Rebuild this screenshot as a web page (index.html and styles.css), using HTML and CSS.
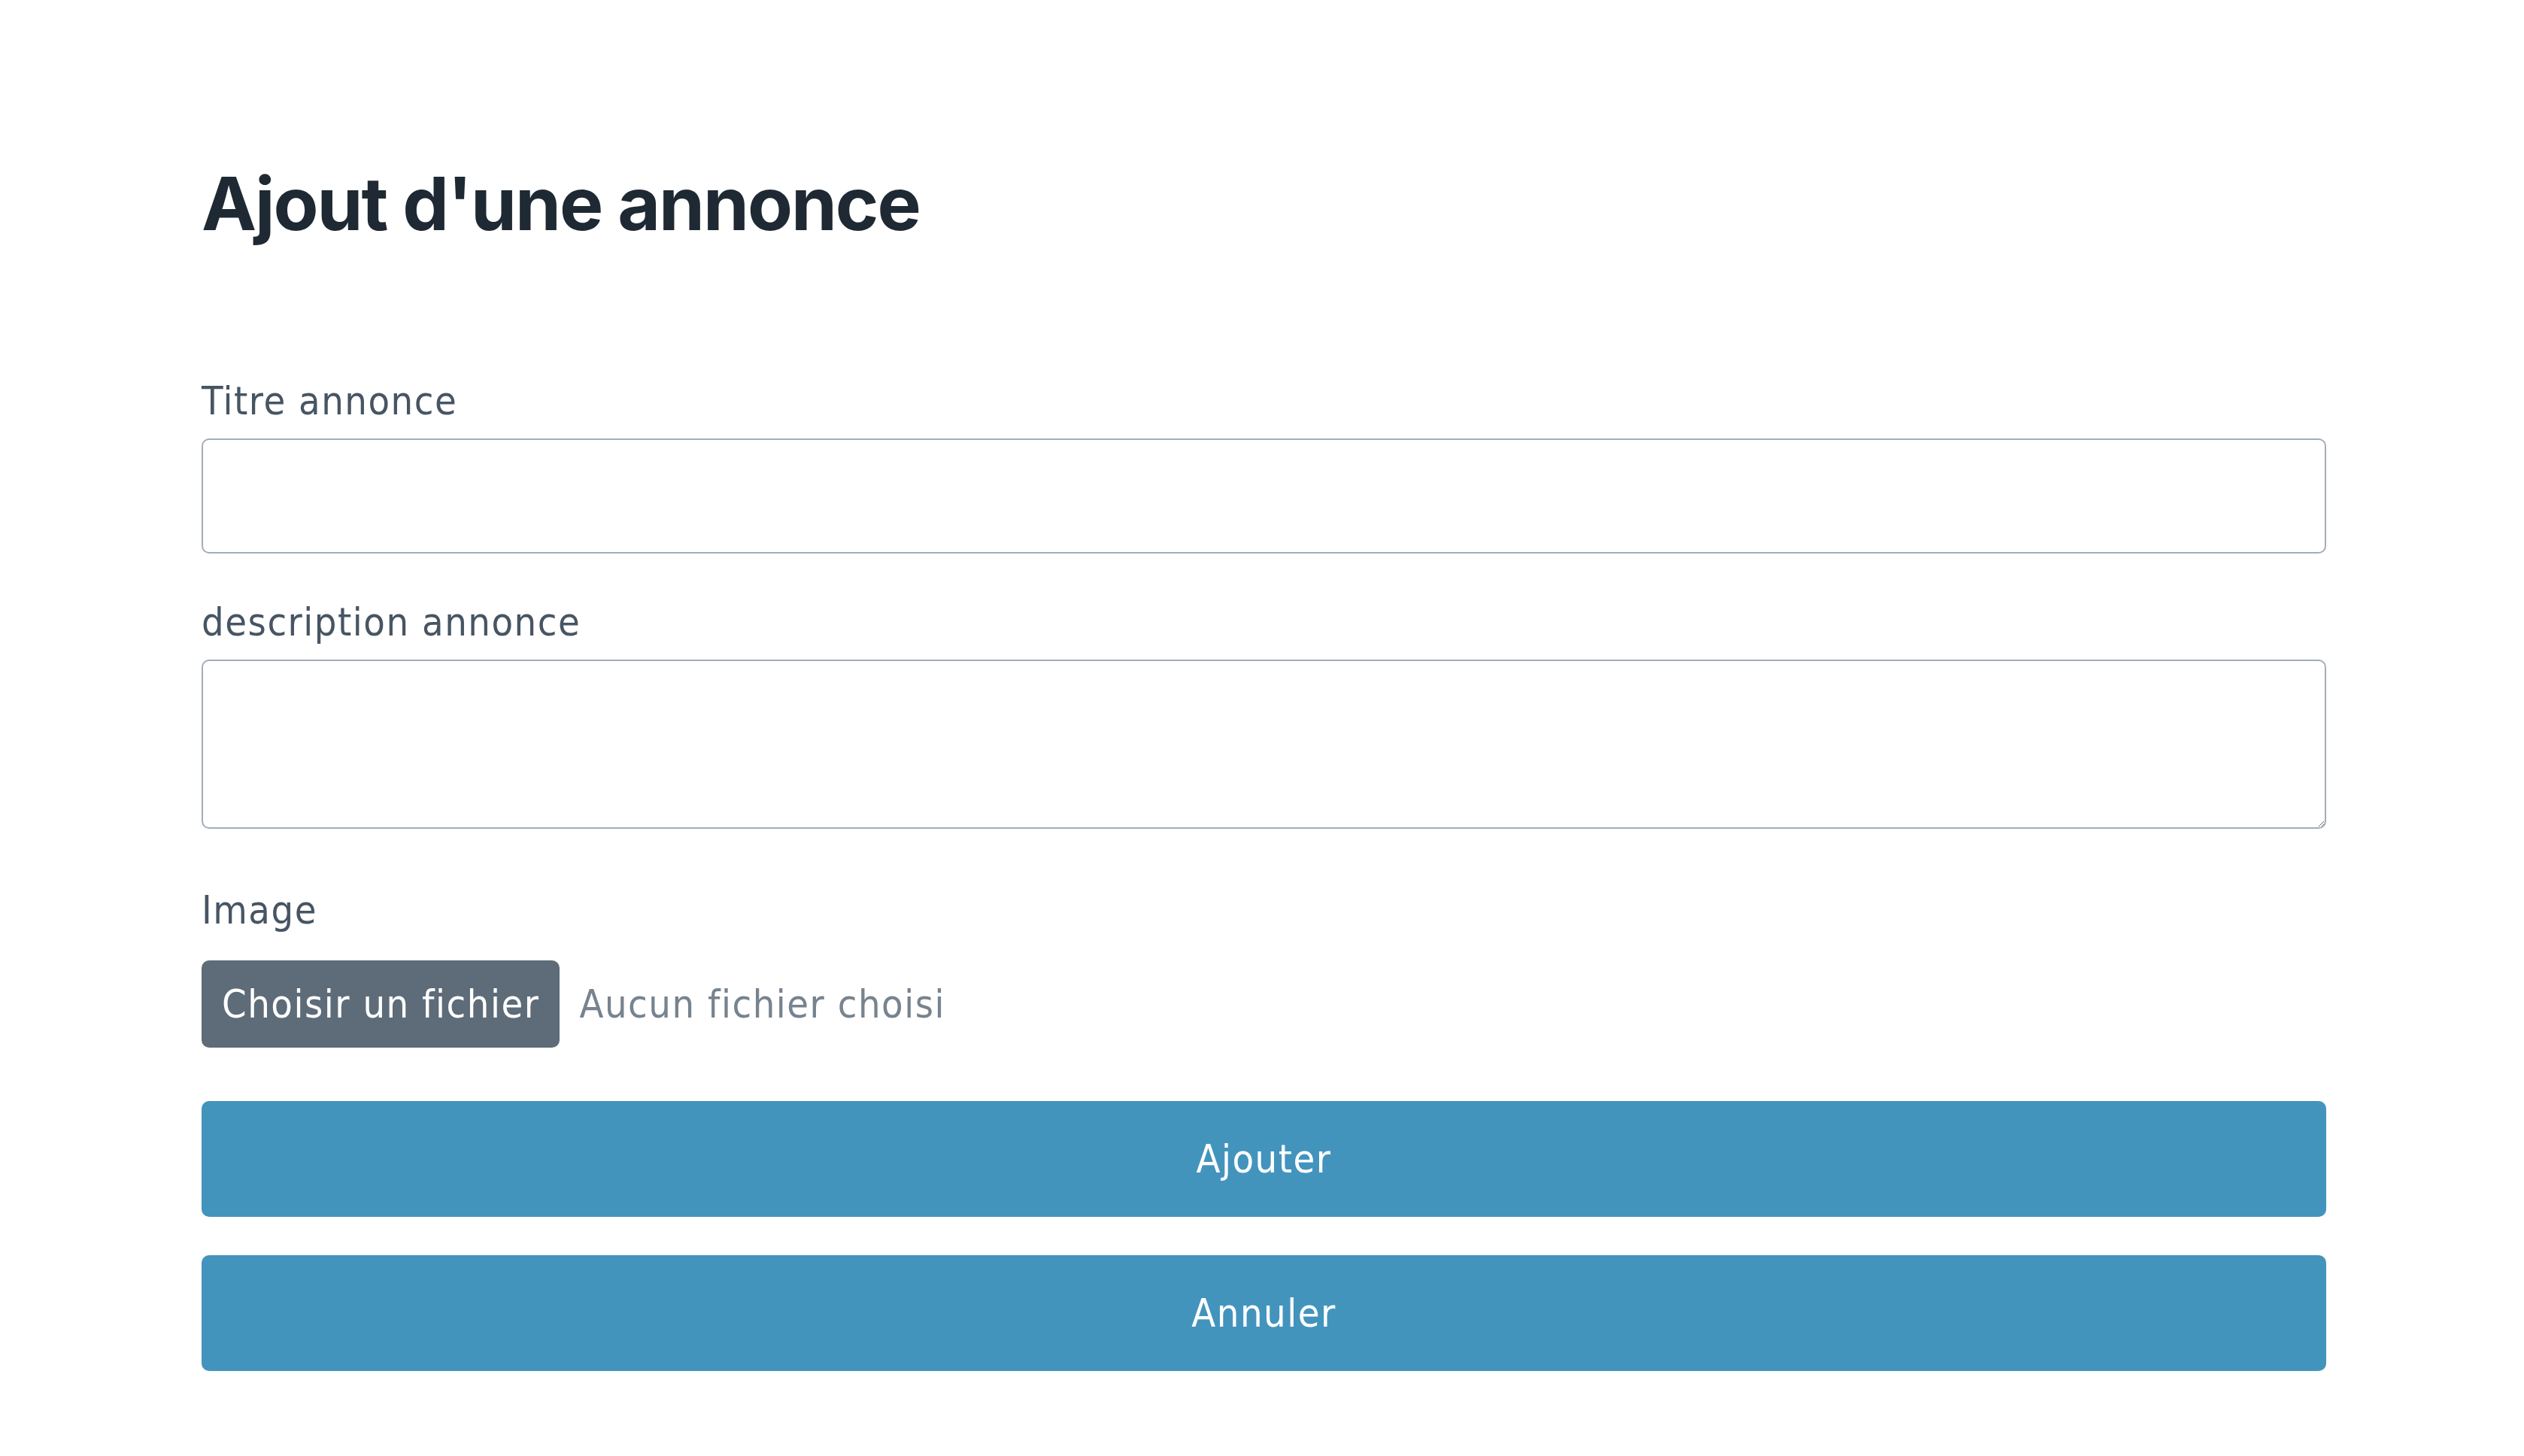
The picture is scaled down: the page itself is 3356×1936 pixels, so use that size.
FILE: index.html
```html
<!DOCTYPE html>
<html lang="fr">
<head>
<meta charset="utf-8">
<title>Ajout d'une annonce</title>
<link rel="stylesheet" href="styles.css">
</head>
<body>
<main class="page">
  <h1 class="title">Ajout d'une annonce</h1>
  <form class="form">
    <div class="field">
      <label class="label" for="titre">Titre annonce</label>
      <input class="input" id="titre" type="text">
    </div>
    <div class="field field-area">
      <label class="label" for="desc">description annonce</label>
      <textarea class="textarea" id="desc"></textarea>
    </div>
    <div class="field field-file">
      <span class="label">Image</span>
      <div class="file-row">
        <label class="file-btn">Choisir un fichier<input class="file-input" type="file"></label>
        <span class="file-name">Aucun fichier choisi</span>
      </div>
    </div>
    <button class="btn btn-add" type="submit">Ajouter</button>
    <button class="btn" type="button">Annuler</button>
  </form>
</main>
</body>
</html>
```

FILE: styles.css
```css
html, body {
  margin: 0;
  padding: 0;
  background: #ffffff;
}

.page {
  width: 2825px;
  margin: 0 0 0 268px;
  padding-top: 212px;
  box-sizing: border-box;
}

.title {
  margin: 0;
  font-family: Inter, "Liberation Sans", sans-serif;
  font-weight: 700;
  font-size: 98px;
  line-height: 1.2;
  letter-spacing: -2.1px;
  color: #1f2933;
}

.form {
  display: flex;
  flex-direction: column;
  margin-top: 171px;
}

.field {
  display: flex;
  flex-direction: column;
  margin-bottom: 59px;
}

.field-area {
  margin-bottom: 76px;
}

.field-file {
  margin-bottom: 71px;
}

.label {
  display: block;
  font-family: "DejaVu Sans Condensed", "DejaVu Sans", sans-serif;
  font-stretch: condensed;
  font-size: 52px;
  line-height: 64px;
  letter-spacing: 1.5px;
  color: #475563;
  margin-bottom: 18px;
}

.field-file .label {
  margin-bottom: 35px;
}

.input,
.textarea {
  display: block;
  width: 100%;
  box-sizing: border-box;
  margin: 0;
  border: 2px solid #a3adb7;
  border-radius: 10px;
  background: #ffffff;
  font-family: "DejaVu Sans", sans-serif;
  font-size: 48px;
  padding: 0 24px;
  outline: none;
}

.input {
  height: 153px;
}

.textarea {
  height: 225px;
  resize: vertical;
  padding: 20px 24px;
}

.file-row {
  display: flex;
  align-items: center;
  gap: 26px;
}

.file-btn {
  display: flex;
  align-items: center;
  height: 116px;
  padding: 0 27px;
  box-sizing: border-box;
  background: #5e6b78;
  color: #ffffff;
  border-radius: 10px;
  font-family: "DejaVu Sans Condensed", "DejaVu Sans", sans-serif;
  font-stretch: condensed;
  font-size: 52px;
  letter-spacing: 1.5px;
  cursor: pointer;
}

.file-input {
  display: none;
}

.file-name {
  font-family: "DejaVu Sans Condensed", "DejaVu Sans", sans-serif;
  font-stretch: condensed;
  font-size: 52px;
  letter-spacing: 1.5px;
  color: #77838e;
}

.btn {
  display: flex;
  align-items: center;
  justify-content: center;
  width: 100%;
  height: 154px;
  margin: 0;
  border: none;
  border-radius: 10px;
  background: #4394bd;
  color: #ffffff;
  font-family: "DejaVu Sans Condensed", "DejaVu Sans", sans-serif;
  font-stretch: condensed;
  font-size: 52px;
  letter-spacing: 1.5px;
  cursor: pointer;
}

.btn-add {
  margin-bottom: 51px;
}
```
